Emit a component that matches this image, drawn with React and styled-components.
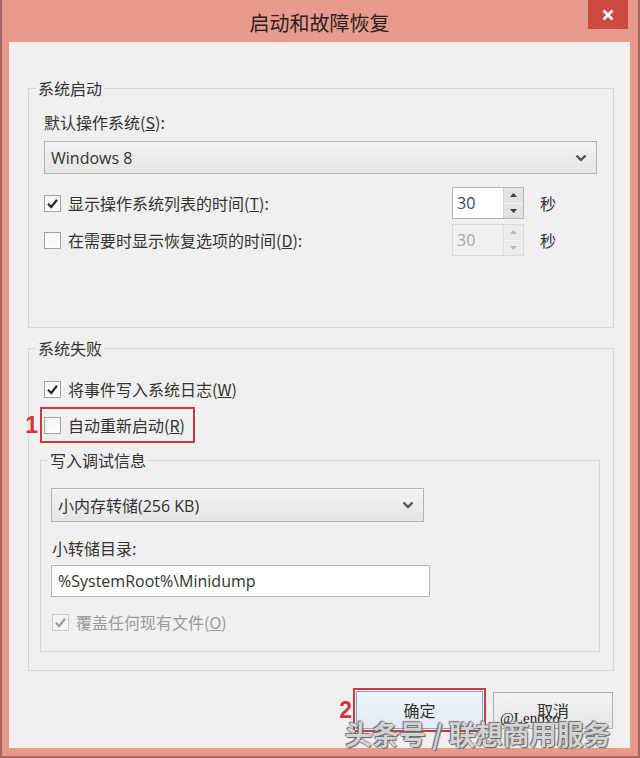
import React from "react";
import styled, { createGlobalStyle } from "styled-components";

const GlobalStyle = createGlobalStyle`
  html, body { margin: 0; padding: 0; }
  body {
    width: 640px;
    height: 758px;
    overflow: hidden;
    background: #e89b8b;
    font-family: "Noto Sans", "Noto Sans CJK SC", sans-serif;
    color: #333;
  }
`;

const Frame = styled.div`
  position: relative;
  box-sizing: border-box;
  width: 640px;
  height: 758px;
  display: flex;
  flex-direction: column;
  background: #e89b8b;
  border: 2px solid #a56a5e;
  border-top: 0;
  padding: 0 8px 8px 7px;
`;

const TitleBar = styled.div`
  display: grid;
  grid-template-columns: 1fr auto 1fr;
  height: 42px;
  align-items: center;
`;

const Title = styled.div`
  grid-column: 2;
  font-family: "Noto Sans CJK SC", sans-serif;
  font-size: 20px;
  color: #2a2222;
  padding-top: 2px;
`;

const Close = styled.div`
  grid-column: 3;
  justify-self: end;
  align-self: start;
  width: 40px;
  height: 29px;
  margin-right: 2px;
  background: #cc4a40;
  display: flex;
  align-items: center;
  justify-content: center;
`;

const Body = styled.div`
  flex: 1;
  background: #f0f0f0;
  padding: 36px 16px 16px 19px;
  display: flex;
  flex-direction: column;
  box-shadow: inset 0 0 0 1px #fbe9e4;
`;

const Group = styled.fieldset`
  margin: ${(p) => p.$mt || 0}px 0 0 0;
  padding: ${(p) => p.$pt}px ${(p) => p.$pr}px ${(p) => p.$pb}px ${(p) => p.$pl}px;
  border: 1px solid #d6d6d6;
  min-width: 0;
  display: flex;
  flex-direction: column;
  align-items: flex-start;
  align-self: stretch;

  & > legend {
    margin-left: ${(p) => 7 - p.$pl}px;
    padding: 0 2px;
    line-height: 20px;
    font-size: 16px;
    font-family: "Noto Sans CJK SC", sans-serif;
    color: #333;
  }
`;

const Label = styled.div`
  font-family: "Noto Sans CJK SC", sans-serif;
  font-size: 16px;
  line-height: 20px;
  height: 20px;
  margin-top: ${(p) => p.$mt || 0}px;
  margin-left: ${(p) => p.$ml || 0}px;
  color: ${(p) => (p.$disabled ? "#9a9a9a" : "#333")};
  white-space: nowrap;
`;

const Select = styled.div`
  box-sizing: border-box;
  width: ${(p) => p.$w}px;
  height: ${(p) => p.$h}px;
  margin-top: ${(p) => p.$mt || 0}px;
  display: flex;
  align-items: center;
  justify-content: space-between;
  padding: 0 9px 0 6px;
  border: 1px solid #b4b4b4;
  background: linear-gradient(#f3f3f3, #e6e6e6);
  font-size: 16px;
  color: #333;
  font-family: "Open Sans", "Noto Sans CJK SC", sans-serif;
`;

const TextInput = styled.div`
  box-sizing: border-box;
  width: ${(p) => p.$w}px;
  height: 32px;
  margin-top: ${(p) => p.$mt || 0}px;
  display: flex;
  align-items: center;
  padding-left: 6px;
  border: 1px solid #b9b9b9;
  background: #fff;
  font-family: "Open Sans", sans-serif;
  font-size: 16px;
  color: #333;
`;

const Row = styled.div`
  align-self: stretch;
  display: grid;
  grid-template-columns: 1fr 72px 73px;
  align-items: center;
  height: 32px;
  margin-top: ${(p) => p.$mt || 0}px;
`;

const Check = styled.label`
  display: flex;
  align-items: center;
  gap: 7px;
  height: 20px;
  margin-top: ${(p) => p.$mt || 0}px;
  margin-left: ${(p) => p.$ml || 0}px;
  font-family: "Noto Sans CJK SC", sans-serif;
  font-size: 16px;
  color: ${(p) => (p.$disabled ? "#9a9a9a" : "#333")};
  white-space: nowrap;
`;

const Box = styled.span`
  box-sizing: border-box;
  width: 17px;
  height: 17px;
  flex: none;
  display: flex;
  align-items: center;
  justify-content: center;
  border: 1px solid ${(p) => (p.$disabled ? "#cacaca" : "#a3a3a3")};
  background: ${(p) => (p.$disabled ? "#f4f4f4" : "linear-gradient(#f6f6f6, #ffffff)")};
`;

const Spin = styled.div`
  box-sizing: border-box;
  display: flex;
  height: 32px;
  border: 1px solid ${(p) => (p.$disabled ? "#dadada" : "#b6b6b6")};
  background: ${(p) => (p.$disabled ? "#f1f1f1" : "#fff")};
`;

const SpinValue = styled.div`
  flex: 1;
  display: flex;
  align-items: center;
  padding-left: 4px;
  font-family: "Open Sans", sans-serif;
  font-size: 16px;
  color: ${(p) => (p.$disabled ? "#a8a8a8" : "#2f4d66")};
`;

const SpinButtons = styled.div`
  width: 19px;
  display: flex;
  flex-direction: column;
  border-left: 1px solid ${(p) => (p.$disabled ? "#e2e2e2" : "#d0d0d0")};
`;

const SpinArrow = styled.div`
  flex: 1;
  display: flex;
  align-items: center;
  justify-content: center;
  background: ${(p) => (p.$disabled ? "#ececec" : "#e3e3e3")};
  & + & {
    border-top: 1px solid ${(p) => (p.$disabled ? "#f4f4f4" : "#f0f0f0")};
  }
`;

const Unit = styled.div`
  padding-left: 16px;
  font-family: "Noto Sans CJK SC", sans-serif;
  font-size: 16px;
  color: #333;
`;

const Marked = styled.div`
  position: relative;
  display: flex;
  align-items: center;
  margin-top: ${(p) => p.$mt || 0}px;
  border: 2px solid #d4363c;
  padding: ${(p) => p.$pad};
`;

const Num = styled.span`
  position: absolute;
  right: calc(100% + ${(p) => p.$gap}px);
  top: 50%;
  transform: translateY(-50%);
  font-family: "Liberation Sans", sans-serif;
  font-weight: 700;
  font-size: 23px;
  color: #d8333a;
`;

const Footer = styled.div`
  display: flex;
  justify-content: flex-end;
  align-items: center;
  gap: 7px;
  margin-top: 17px;
  padding-right: 1px;
`;

const Button = styled.div`
  box-sizing: border-box;
  width: ${(p) => p.$w}px;
  height: ${(p) => p.$h}px;
  display: flex;
  align-items: center;
  justify-content: center;
  border: 1px solid ${(p) => (p.$primary ? "#7fa7cf" : "#b2b2b2")};
  background: ${(p) =>
    p.$primary ? "linear-gradient(#eef4fa, #e2ecf6)" : "linear-gradient(#f3f3f3, #e6e6e6)"};
  font-family: "Noto Sans CJK SC", sans-serif;
  font-size: 16px;
  color: #333;
`;

const Watermark = styled.div`
  position: absolute;
  left: 343px;
  top: 718px;
  font-family: "Noto Sans CJK SC", sans-serif;
  font-size: 27px;
  font-weight: 700;
  line-height: 32px;
  color: rgba(226, 226, 226, 0.92);
  text-shadow: 0 0 1px #4a4a4a, 1px 1px 1px #666, -1px -1px 1px #777;
  white-space: nowrap;
  pointer-events: none;
`;

const Tag = styled.div`
  position: absolute;
  left: 498px;
  top: 710px;
  font-family: "Liberation Serif", serif;
  font-size: 15px;
  color: #1e1e1e;
  pointer-events: none;
`;

const Tick = ({ disabled }) => (
  <svg width="13" height="13" viewBox="0 0 13 13">
    <path
      d="M2 6.8 L5.2 10 L11 2.8"
      fill="none"
      stroke={disabled ? "#9c9c9c" : "#2b2b2b"}
      strokeWidth="2.2"
    />
  </svg>
);

const Chevron = () => (
  <svg width="12" height="8" viewBox="0 0 12 8">
    <path d="M1.5 1.5 L6 6 L10.5 1.5" fill="none" stroke="#555" strokeWidth="2.4" />
  </svg>
);

const Tri = ({ up, disabled }) => (
  <svg width="7" height="4" viewBox="0 0 7 4">
    <path d={up ? "M0 4 L3.5 0 L7 4 Z" : "M0 0 L3.5 4 L7 0 Z"} fill={disabled ? "#b8b8b8" : "#3a3a3a"} />
  </svg>
);

const CheckBox = ({ checked, disabled, children, mt, ml }) => (
  <Check $disabled={disabled} $mt={mt} $ml={ml}>
    <Box $disabled={disabled}>{checked && <Tick disabled={disabled} />}</Box>
    <span>{children}</span>
  </Check>
);

const SpinBox = ({ value, disabled }) => (
  <Spin $disabled={disabled}>
    <SpinValue $disabled={disabled}>{value}</SpinValue>
    <SpinButtons $disabled={disabled}>
      <SpinArrow $disabled={disabled}>
        <Tri up disabled={disabled} />
      </SpinArrow>
      <SpinArrow $disabled={disabled}>
        <Tri disabled={disabled} />
      </SpinArrow>
    </SpinButtons>
  </Spin>
);

export default function App() {
  return (
    <>
      <GlobalStyle />
      <Frame>
        <TitleBar>
          <Title>启动和故障恢复</Title>
          <Close>
            <svg width="12" height="12" viewBox="0 0 12 12">
              <path d="M1.5 1.5 L10.5 10.5 M10.5 1.5 L1.5 10.5" stroke="#fff" strokeWidth="2.6" />
            </svg>
          </Close>
        </TitleBar>
        <Body>
          <Group $pt={14} $pr={16} $pb={71} $pl={15}>
            <legend>系统启动</legend>
            <Label>
              默认操作系统(<u>S</u>):
            </Label>
            <Select $w={553} $h={33} $mt={9}>
              <span>Windows 8</span>
              <Chevron />
            </Select>
            <Row $mt={13}>
              <CheckBox checked>
                显示操作系统列表的时间(<u>T</u>):
              </CheckBox>
              <SpinBox value="30" />
              <Unit>秒</Unit>
            </Row>
            <Row $mt={5}>
              <CheckBox>
                在需要时显示恢复选项的时间(<u>D</u>):
              </CheckBox>
              <SpinBox value="30" disabled />
              <Unit>秒</Unit>
            </Row>
          </Group>

          <Group $mt={10} $pt={21} $pr={13} $pb={18} $pl={11}>
            <legend>系统失败</legend>
            <CheckBox checked ml={4}>
              将事件写入系统日志(<u>W</u>)
            </CheckBox>
            <Marked $mt={8} $pad="6px 8px 6px 2px">
              <Num $gap={4}>1</Num>
              <CheckBox>
                自动重新启动(<u>R</u>)
              </CheckBox>
            </Marked>
            <Group $mt={7} $pt={18} $pr={10} $pb={19} $pl={10}>
              <legend>写入调试信息</legend>
              <Select $w={373} $h={34}>
                <span>小内存转储(256 KB)</span>
                <Chevron />
              </Select>
              <Label $mt={16} $ml={1}>
                小转储目录:
              </Label>
              <TextInput $w={379} $mt={7}>
                %SystemRoot%\Minidump
              </TextInput>
              <CheckBox checked disabled mt={15} ml={1}>
                覆盖任何现有文件(<u>O</u>)
              </CheckBox>
            </Group>
          </Group>

          <Footer>
            <Marked $pad="1px">
              <Num $gap={3}>2</Num>
              <Button $primary $w={127} $h={38}>
                确定
              </Button>
            </Marked>
            <Button $w={120} $h={37}>
              取消
            </Button>
          </Footer>
        </Body>
        <Tag>@Lenovo</Tag>
        <Watermark>头条号 / 联想商用服务</Watermark>
      </Frame>
    </>
  );
}
